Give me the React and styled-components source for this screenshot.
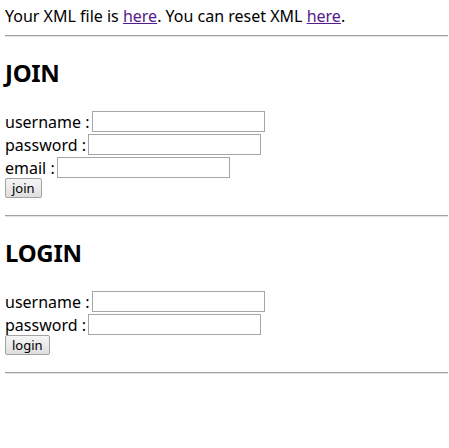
import React from 'react'
import styled, { createGlobalStyle } from 'styled-components'

const GlobalStyle = createGlobalStyle`
  html, body {
    margin: 0;
    padding: 0;
    background: #ffffff;
  }
  body {
    font-family: "Noto Sans", "Noto Sans CJK KR", sans-serif;
    font-size: 16px;
    color: #000000;
  }
`

const Page = styled.div`
  padding: 5px 1px 0 5px;
  display: flex;
  flex-direction: column;
`

const Notice = styled.p`
  margin: 0;
  line-height: 23px;
  white-space: nowrap;
`

const Link = styled.a`
  color: #551a8b;
  text-decoration: underline;
`

const Rule = styled.hr`
  margin: ${({ $top = 7 }) => $top}px 0 0 0;
  height: 0;
  border: 0;
  border-top: 1px solid #a0a0a0;
  border-bottom: 1px solid #e4e4e4;
`

const Section = styled.section`
  display: flex;
  flex-direction: column;
`

const Title = styled.h2`
  margin: 22px 0 23px 0;
  font-size: 24px;
  font-weight: 700;
  line-height: 28px;
  letter-spacing: -0.3px;
`

const Row = styled.div`
  display: flex;
  align-items: center;
  height: 23px;
  white-space: nowrap;
`

const Label = styled.span`
  margin-right: 2px;
`

const Field = styled.input`
  box-sizing: border-box;
  width: 173px;
  height: 21px;
  margin: 0;
  padding: 1px 2px;
  border: 1px solid #a6a6a6;
  font-family: inherit;
  font-size: 13px;
  outline: none;
`

const Submit = styled.button`
  box-sizing: border-box;
  height: 20px;
  margin: 0;
  padding: 0 6px;
  border: 1px solid #a3a3a3;
  border-radius: 2px;
  background: linear-gradient(#f6f6f6, #dedede);
  font-family: inherit;
  font-size: 13px;
  line-height: 16px;
  color: #000;
`

const ButtonRow = styled.div`
  display: flex;
  height: 20px;
  margin-top: -1px;
`

const fields = {
  join: [
    { label: 'username', type: 'text' },
    { label: 'password', type: 'password' },
    { label: 'email', type: 'text' },
  ],
  login: [
    { label: 'username', type: 'text' },
    { label: 'password', type: 'password' },
  ],
}

const FormSection = ({ title, action, items }) => (
  <Section>
    <Title>{title}</Title>
    <form onSubmit={(e) => e.preventDefault()}>
      {items.map((f) => (
        <Row key={f.label}>
          <Label>{f.label} :</Label>
          <Field type={f.type} name={f.label} />
        </Row>
      ))}
      <ButtonRow>
        <Submit type="submit">{action}</Submit>
      </ButtonRow>
    </form>
  </Section>
)

const App = () => (
  <Page>
    <GlobalStyle />
    <Notice>
      Your XML file is <Link href="#xml">here</Link>. You can reset XML <Link href="#reset">here</Link>.
    </Notice>
    <Rule />
    <FormSection title="JOIN" action="join" items={fields.join} />
    <Rule $top={17} />
    <FormSection title="LOGIN" action="login" items={fields.login} />
    <Rule $top={17} />
  </Page>
)

export default App
